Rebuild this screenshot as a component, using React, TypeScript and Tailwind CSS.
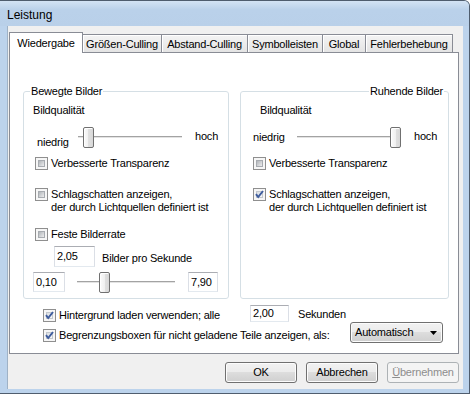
import { ReactNode } from "react";

const Box = ({ checked = false }: { checked?: boolean }) => (
  <div className="relative w-[13px] h-[13px] shrink-0 border border-[#8f8f8f] bg-[#f6f6f6] p-[2px]">
    <div
      className={`w-full h-full border ${
        checked
          ? "border-[#c3c8ce] bg-linear-to-br from-[#d9dde2] to-[#f6f7f8]"
          : "border-[#a7abb0] bg-linear-to-br from-[#b1b5b9] to-[#ededee]"
      }`}
    />
    {checked && (
      <svg className="absolute -left-px -top-px" width="13" height="13" viewBox="0 0 13 13">
        <path d="M3 6.2 L5.2 9 L10 3" fill="none" stroke="#3f5d9e" strokeWidth="2" />
      </svg>
    )}
  </div>
);

const CheckRow = ({ checked, children, className }: { checked?: boolean; children: ReactNode; className: string }) => (
  <div className={`flex items-start ${className}`}>
    <Box checked={checked} />
    <div className="ml-[3px]">{children}</div>
  </div>
);

const Field = ({ value, className }: { value: string; className: string }) => (
  <div
    className={`${className} bg-white border border-[#abadb3] border-l-[#dbdfe6] border-r-[#dbdfe6] border-b-[#e3e9ef] pl-[2px] flex items-center`}
  >
    {value}
  </div>
);

const Slider = ({ className, thumb }: { className: string; thumb: string }) => (
  <div className={`relative h-[21px] shrink-0 ${className}`}>
    <div className="absolute left-0 right-0 top-[9px] h-[3px] border-t border-[#a3a3a3] bg-[#e3e3e3] border-b border-b-white" />
    <div
      className={`absolute top-0 ${thumb} w-[11px] h-[21px] rounded-[2px] border border-[#707070] bg-[linear-gradient(90deg,#fbfbfb_0%,#f0f0f0_50%,#e0e0e0_50%,#d8d8d8_100%)] shadow-[inset_1px_1px_0_#fff]`}
    />
  </div>
);

const btn =
  "w-[72px] h-[21px] rounded-[3px] border flex items-center justify-center";
const btnOn =
  "border-[#707070] bg-[linear-gradient(#f2f2f2_0%,#ebebeb_50%,#dddddd_50%,#cfcfcf_100%)] shadow-[inset_0_0_0_1px_#fcfcfc]";

const tabs = [
  { label: "Wiedergabe", w: "w-[74px]" },
  { label: "Größen-Culling", w: "w-[80px]" },
  { label: "Abstand-Culling", w: "w-[87px]" },
  { label: "Symbolleisten", w: "w-[76px]" },
  { label: "Global", w: "w-[44px]" },
  { label: "Fehlerbehebung", w: "w-[88px]" },
];

export default function App() {
  return (
    <div className="w-[470px] h-[394px] flex flex-col bg-[#bcd3ec] border-t border-r border-b border-[#4f5d6e] rounded-tr-[6px] font-['Liberation_Sans',Arial,sans-serif] text-[11px] leading-[13px] text-black overflow-hidden">
      <div className="h-[25px] shrink-0 flex items-center pt-[3px] pl-[7px] text-[12px] bg-[linear-gradient(#d3e3f4,#bad1ea_35%,#b9d0e9)]">
        Leistung
      </div>

      <div className="flex-1 ml-[7px] mr-[6px] mb-[4px] bg-[#f0f0f0] border-l border-[#9fb2c6] pl-px pr-[4px] pt-[6px] flex flex-col tracking-[-0.2px]">
        <div className="flex items-end h-[21px]">
          {tabs.map((t, i) =>
            i === 0 ? (
              <div
                key={t.label}
                className={`${t.w} relative z-10 h-[21px] shrink-0 bg-white border-t border-l border-r border-[#898c95] flex items-center justify-center`}
              >
                {t.label}
              </div>
            ) : (
              <div
                key={t.label}
                className={`${t.w} -ml-px h-[19px] shrink-0 border-t border-l border-r border-[#898c95] bg-[linear-gradient(#f4f4f4,#e3e3e3)] shadow-[inset_1px_1px_0_#fff] flex items-center justify-center`}
              >
                {t.label}
              </div>
            )
          )}
        </div>

        <div className="-mt-px w-[450px] h-[302px] shrink-0 bg-white border border-[#898c95] pt-[31px] pl-[13px] pr-[9px]">
          <div className="flex gap-[11px] h-[215px]">
            <fieldset className="w-[206px] h-[215px] border border-[#d5dfe5] rounded-[3px]">
              <legend className="ml-[6px] px-px leading-[14px]">Bewegte Bilder</legend>
              <div className="mt-[6px] pl-[9px]">Bildqualität</div>
              <div className="mt-[10px] flex items-start h-[21px]">
                <div className="ml-[13px] w-[41px] mt-[9px]">niedrig</div>
                <Slider className="w-[104px]" thumb="left-[5px]" />
                <div className="ml-[13px] mt-[3px]">hoch</div>
              </div>
              <CheckRow className="mt-[9px] ml-[11px]">Verbesserte Transparenz</CheckRow>
              <CheckRow className="mt-[18px] ml-[11px]">
                Schlagschatten anzeigen,
                <br />
                der durch Lichtquellen definiert ist
              </CheckRow>
              <CheckRow className="mt-[14px] ml-[11px]">Feste Bilderrate</CheckRow>
              <div className="mt-[5px] flex items-start h-[21px]">
                <Field value="2,05" className="ml-[30px] w-[41px] h-[21px]" />
                <div className="ml-[7px] mt-[6px]">Bilder pro Sekunde</div>
              </div>
              <div className="mt-[5px] flex items-start h-[20px]">
                <Field value="0,10" className="ml-[9px] w-[32px] h-[20px]" />
                <Slider className="ml-[12px] w-[98px]" thumb="left-[22px]" />
                <Field value="7,90" className="ml-[13px] w-[30px] h-[20px]" />
              </div>
            </fieldset>

            <fieldset className="w-[209px] h-[215px] border border-[#d5dfe5] rounded-[3px]">
              <legend className="ml-auto mr-[4px] px-px leading-[14px]">Ruhende Bilder</legend>
              <div className="mt-[6px] pl-[19px]">Bildqualität</div>
              <div className="mt-[10px] flex items-start h-[21px]">
                <div className="ml-[12px] w-[44px] mt-[4px]">niedrig</div>
                <Slider className="w-[104px]" thumb="left-[93px]" />
                <div className="ml-[13px] mt-[3px]">hoch</div>
              </div>
              <CheckRow className="mt-[9px] ml-[12px]">Verbesserte Transparenz</CheckRow>
              <CheckRow checked className="mt-[18px] ml-[12px]">
                Schlagschatten anzeigen,
                <br />
                der durch Lichtquellen definiert ist
              </CheckRow>
            </fieldset>
          </div>

          <div className="mt-[6px] flex items-start h-[17px]">
            <CheckRow checked className="ml-[20px] w-[207px] mt-[4px]">
              Hintergrund laden verwenden; alle
            </CheckRow>
            <Field value="2,00" className="w-[39px] h-[17px]" />
            <div className="ml-[9px] mt-[3px]">Sekunden</div>
          </div>
          <div className="flex items-start h-[21px]">
            <CheckRow checked className="ml-[20px] w-[307px] mt-[7px]">
              Begrenzungsboxen für nicht geladene Teile anzeigen, als:
            </CheckRow>
            <div className={`w-[93px] h-[21px] rounded-[3px] border ${btnOn} flex items-center pl-[4px] pr-[5px]`}>
              Automatisch
              <svg className="ml-auto" width="7" height="4" viewBox="0 0 7 4">
                <polygon points="0,0 7,0 3.5,4" fill="#000" />
              </svg>
            </div>
          </div>
        </div>

        <div className="mt-[8px] flex justify-end gap-[9px]">
          <div className={`${btn} ${btnOn}`}>OK</div>
          <div className={`${btn} ${btnOn}`}>Abbrechen</div>
          <div className={`${btn} border-[#adb2b5] bg-[#f4f4f4] text-[#8d8d8d]`}>
            <span className="underline">Ü</span>bernehmen
          </div>
        </div>
      </div>
    </div>
  );
}
